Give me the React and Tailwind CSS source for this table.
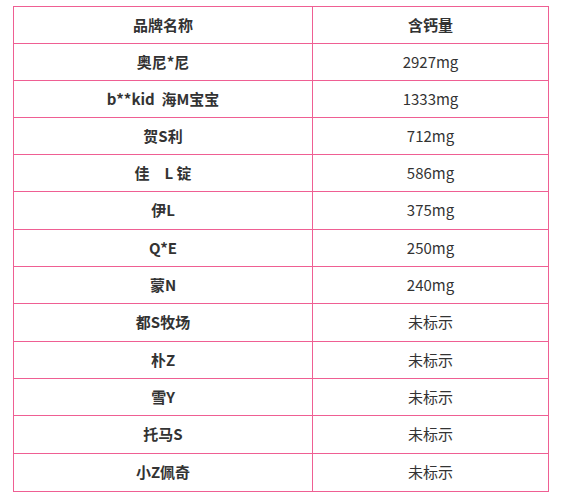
import React from "react";

const rows = [
  ["奥尼*尼", "2927mg", 37],
  ["b**kid  海M宝宝", "1333mg", 37],
  ["贺S利", "712mg", 37],
  ["佳\u3000L 锭", "586mg", 37],
  ["伊L", "375mg", 38],
  ["Q*E", "250mg", 37],
  ["蒙N", "240mg", 37],
  ["都S牧场", "未标示", 38],
  ["朴Z", "未标示", 37],
  ["雪Y", "未标示", 37],
  ["托马S", "未标示", 38],
  ["小Z佩奇", "未标示", 38],
];

export default function App() {
  return (
    <div
      className="min-h-screen bg-white pt-[6px] pl-[13px] text-[15px] text-[#333333]"
      style={{ fontFamily: '"Noto Sans CJK SC", "Noto Sans", sans-serif' }}
    >
      <div className="w-[536px] border-t border-l border-[#ef5f93]">
        {/* header */}
        <div className="flex h-[37px]">
          <div className="w-[299px] flex items-center justify-center border-r border-b border-[#ef5f93] font-bold whitespace-pre">
            品牌名称
          </div>
          <div className="w-[236px] flex items-center justify-center border-r border-b border-[#ef5f93] font-bold">
            含钙量
          </div>
        </div>

        {rows.map(([brand, calcium, h], i) => (
          <div key={i} className={h === 38 ? "flex h-[38px]" : "flex h-[37px]"}>
            <div className="w-[299px] flex items-center justify-center border-r border-b border-[#ef5f93] font-bold whitespace-pre">
              {brand}
            </div>
            <div className="w-[236px] flex items-center justify-center border-r border-b border-[#ef5f93]">
              {calcium}
            </div>
          </div>
        ))}
      </div>
    </div>
  );
}
